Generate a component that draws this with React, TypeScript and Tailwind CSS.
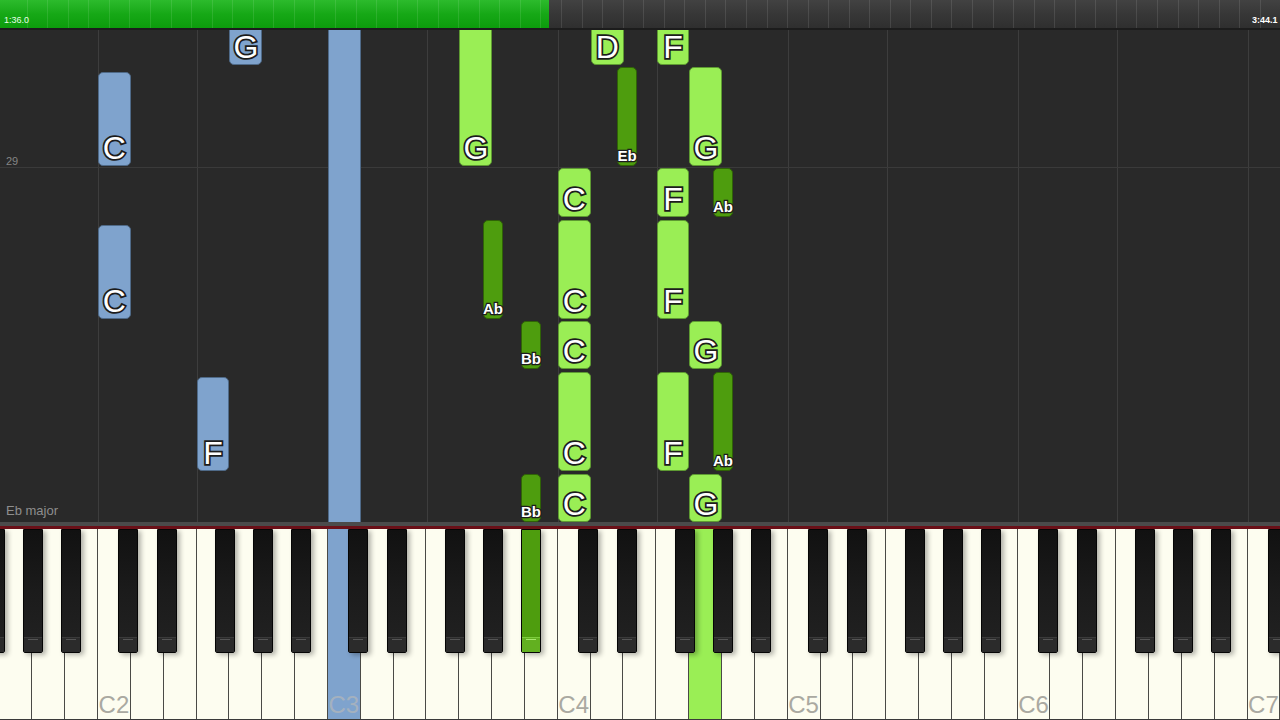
import React from "react";

const WK = 230 / 7; // white key width
const C2X = 98; // x of C2
const BLACK_OFF = [20, 59, 117, 155, 193]; // C# D# F# G# A# from octave start

type Kind = "blue" | "green" | "dark";
type NoteData = { x: number; top: number; h: number; kind: Kind; label?: string };

const wx = (oct: number, idx: number) => C2X + (oct - 2) * 230 + idx * WK;
const bx = (oct: number, b: number) => C2X + (oct - 2) * 230 + BLACK_OFF[b];

const notes: NoteData[] = [
  // left hand
  { x: wx(2, 4), top: -20, h: 55, kind: "blue", label: "G" },
  { x: wx(2, 0), top: 42, h: 94, kind: "blue", label: "C" },
  { x: wx(2, 0), top: 195, h: 94, kind: "blue", label: "C" },
  { x: wx(2, 3), top: 347, h: 94, kind: "blue", label: "F" },
  { x: wx(3, 0), top: -20, h: 520, kind: "blue" },
  // right hand
  { x: wx(3, 4), top: -20, h: 156, kind: "green", label: "G" },
  { x: wx(4, 1), top: -20, h: 55, kind: "green", label: "D" },
  { x: wx(4, 3), top: -20, h: 55, kind: "green", label: "F" },
  { x: wx(4, 4), top: 37, h: 99, kind: "green", label: "G" },
  { x: wx(4, 0), top: 138, h: 49, kind: "green", label: "C" },
  { x: wx(4, 3), top: 138, h: 49, kind: "green", label: "F" },
  { x: wx(4, 0), top: 190, h: 99, kind: "green", label: "C" },
  { x: wx(4, 3), top: 190, h: 99, kind: "green", label: "F" },
  { x: wx(4, 0), top: 291, h: 48, kind: "green", label: "C" },
  { x: wx(4, 4), top: 291, h: 48, kind: "green", label: "G" },
  { x: wx(4, 0), top: 342, h: 99, kind: "green", label: "C" },
  { x: wx(4, 3), top: 342, h: 99, kind: "green", label: "F" },
  { x: wx(4, 0), top: 444, h: 48, kind: "green", label: "C" },
  { x: wx(4, 4), top: 444, h: 48, kind: "green", label: "G" },
  { x: bx(4, 1), top: 37, h: 99, kind: "dark", label: "Eb" },
  { x: bx(4, 3), top: 138, h: 49, kind: "dark", label: "Ab" },
  { x: bx(3, 3), top: 190, h: 99, kind: "dark", label: "Ab" },
  { x: bx(3, 4), top: 291, h: 48, kind: "dark", label: "Bb" },
  { x: bx(4, 3), top: 342, h: 99, kind: "dark", label: "Ab" },
  { x: bx(3, 4), top: 444, h: 48, kind: "dark", label: "Bb" },
];

const noteCls: Record<Kind, string> = {
  blue: "bg-[#7fa3cd] border-[#4f6a88]",
  green: "bg-[#9aee55] border-[#5e9a32]",
  dark: "bg-[#4e9d0e] border-[#2f6306]",
};

function Note({ n }: { n: NoteData }) {
  const black = n.kind === "dark";
  return (
    <div
      className={`absolute flex flex-col items-center justify-end rounded-[5px] border ${noteCls[n.kind]}`}
      style={{ left: n.x, top: n.top, width: black ? 20 : WK, height: n.h }}
    >
      {n.label &&
        (black ? (
          <span className="pb-[2px] text-[15px] leading-none font-bold text-white [paint-order:stroke_fill] [-webkit-text-stroke:2.5px_#1c1c1c]">
            {n.label}
          </span>
        ) : (
          <span className="pb-[1px] text-[32px] leading-none text-white [paint-order:stroke_fill] [-webkit-text-stroke:3.5px_#1c1c1c]">
            {n.label}
          </span>
        ))}
    </div>
  );
}

function TopBar() {
  const ticks = Array.from({ length: 62 }, (_, i) => 26.7 + i * 20.55);
  return (
    <div className="relative flex h-[30px] border-b-2 border-[#1c1c1c]">
      <div className="flex w-[549px] items-end bg-gradient-to-b from-[#2cbb2c] via-[#16a816] to-[#0c9c0c] pb-[3px] pl-[4px]">
        <span className="text-[9px] leading-none text-[#e8ffe8]">1:36.0</span>
      </div>
      <div className="flex flex-1 items-end justify-end bg-gradient-to-b from-[#424242] via-[#373737] to-[#2f2f2f] pb-[3px]">
        <span className="w-[28px] overflow-hidden text-[9px] leading-none font-bold whitespace-nowrap text-white">
          3:44.1
        </span>
      </div>
      {ticks.map((x) => (
        <div key={x} className="absolute top-0 h-[28px] w-px bg-white/10" style={{ left: x }} />
      ))}
    </div>
  );
}

function Roll() {
  const lines: number[] = [];
  for (let o = 2; o <= 7; o++) {
    lines.push(wx(o, 0));
    if (o < 7) lines.push(wx(o, 3));
  }
  return (
    <div className="relative h-[492px] overflow-hidden bg-[#292929]">
      {lines.map((x) => (
        <div key={x} className="absolute top-0 h-full w-px bg-[#3d3d3d]" style={{ left: x }} />
      ))}
      <div className="absolute left-0 top-[137px] h-px w-full bg-[#3a3a3a]" />
      <span className="absolute left-[6px] top-[123px] text-[11px] text-[#858585]">29</span>
      {notes.map((n, i) => (
        <Note key={i} n={n} />
      ))}
      <span className="absolute left-[6px] top-[471px] text-[13px] text-[#8e8e8e]">Eb major</span>
    </div>
  );
}

function Keyboard() {
  const whites = Array.from({ length: 39 }, (_, i) => i + 11); // G1 upward
  const blacks: { x: number; lit: boolean }[] = [];
  for (let o = 1; o <= 7; o++) {
    BLACK_OFF.forEach((_, b) => {
      const x = bx(o, b);
      if (x + 20 > 0 && x < 1280) blacks.push({ x, lit: o === 3 && b === 4 });
    });
  }
  return (
    <div className="relative h-[191px] overflow-hidden border-b border-[#3a3a3a]">
      <div className="ml-[-0.571px] flex h-full">
        {whites.map((w) => {
          const oct = Math.floor(w / 7);
          const idx = w % 7;
          const bg = w === 21 ? "bg-[#7fa3cd]" : w === 32 ? "bg-[#9aee55]" : "bg-[#fdfdf0]";
          return (
            <div
              key={w}
              className={`flex h-full w-[32.857px] shrink-0 items-end justify-center border-r border-[#4a4a46] pb-[2px] ${bg}`}
            >
              {idx === 0 && (
                <span
                  className={`text-[24px] leading-none ${w === 21 ? "text-[#a4b1bf]" : "text-[#aaa9a1]"}`}
                >
                  C{oct}
                </span>
              )}
            </div>
          );
        })}
      </div>
      {blacks.map((b) => (
        <div
          key={b.x}
          className={`absolute top-0 flex h-[124px] w-[20px] flex-col justify-end rounded-b-[2px] border border-[#050505] shadow-[3px_2px_5px_rgba(0,0,0,0.3)] ${
            b.lit ? "bg-[#4e9d0e]" : "bg-gradient-to-b from-[#111] via-[#1b1b1b] to-[#222]"
          }`}
          style={{ left: b.x }}
        >
          <div
            className={`flex h-[15px] justify-center border-t ${
              b.lit ? "border-[#7ccc3c] bg-[#62b020]" : "border-[#3a3a3a] bg-[#2b2b2b]"
            }`}
          >
            <div className={`mt-[1px] h-px w-[10px] ${b.lit ? "bg-[#a6e86c]" : "bg-[#555]"}`} />
          </div>
        </div>
      ))}
    </div>
  );
}

export default function App() {
  return (
    <div className="h-[720px] w-[1280px] overflow-hidden bg-[#292929] font-['Liberation_Sans',Arial,sans-serif]">
      <TopBar />
      <Roll />
      <div className="h-[4px] bg-[#4b4b4b]" />
      <div className="h-[3px] bg-[#6a1018]" />
      <Keyboard />
    </div>
  );
}
